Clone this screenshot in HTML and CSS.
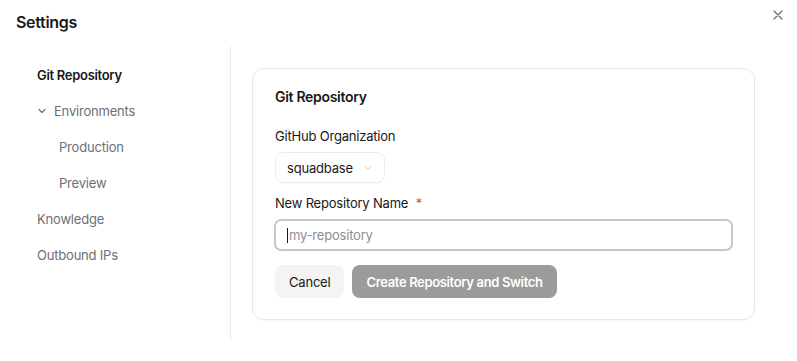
FILE: index.html
```html
<!DOCTYPE html>
<html lang="en">
<head>
    <meta charset="UTF-8">
    <meta name="viewport" content="width=device-width, initial-scale=1.0">
    <title>Settings</title>
    <link rel="stylesheet" href="styles.css">
</head>
<body>

    <div class="dialog">
        <!-- Dialog header -->
        <div class="dialog-header">
            <h1 class="dialog-title">Settings</h1>
            <button class="close-button" aria-label="Close">
                <svg width="10" height="10" viewBox="0 0 10 10">
                    <path d="M1 1L9 9M9 1L1 9" stroke="#6e6e76" stroke-width="1.3" stroke-linecap="round"/>
                </svg>
            </button>
        </div>

        <div class="dialog-body">
            <!-- Side navigation -->
            <nav class="side-nav">
                <a class="nav-item active">Git Repository</a>
                <a class="nav-item">
                    <svg class="nav-chevron" width="10" height="10" viewBox="0 0 10 10">
                        <path d="M2 3.5L5 6.5L8 3.5" fill="none" stroke="#6e6e76" stroke-width="1.2" stroke-linecap="round" stroke-linejoin="round"/>
                    </svg>
                    Environments
                </a>
                <a class="nav-item sub">Production</a>
                <a class="nav-item sub">Preview</a>
                <a class="nav-item">Knowledge</a>
                <a class="nav-item">Outbound IPs</a>
            </nav>

            <!-- Main content -->
            <main class="content">
                <div class="card">
                    <h2 class="card-title">Git Repository</h2>

                    <label class="field-label">GitHub Organization</label>
                    <div class="select">
                        <span>squadbase</span>
                        <svg width="10" height="10" viewBox="0 0 10 10">
                            <path d="M2 3.5L5 6.5L8 3.5" fill="none" stroke="#c4c4c8" stroke-width="1" stroke-linecap="round" stroke-linejoin="round"/>
                        </svg>
                    </div>

                    <label class="field-label">New Repository Name <span class="required">*</span></label>
                    <div class="text-input">
                        <span class="caret"></span><span class="placeholder">my-repository</span>
                    </div>

                    <div class="actions">
                        <button class="btn btn-cancel">Cancel</button>
                        <button class="btn btn-primary" disabled>Create Repository and Switch</button>
                    </div>
                </div>
            </main>
        </div>
    </div>

</body>
</html>
```

FILE: styles.css
```css
/* General Styles */
body {
    font-family: Inter, "Noto Sans", sans-serif;
    margin: 0;
    padding: 0;
    background-color: #ffffff;
    color: #18181b;
    letter-spacing: -0.2px;
}

.dialog {
    display: flex;
    flex-direction: column;
    height: 100vh;
}

/* Header */
.dialog-header {
    display: flex;
    justify-content: space-between;
    align-items: flex-start;
    height: 46px;
    padding: 0 14px 0 16px;
}

.dialog-title {
    margin: 12px 0 0;
    font-size: 16px;
    font-weight: 600;
    line-height: 20px;
    letter-spacing: -0.3px;
}

.close-button {
    margin-top: 10px;
    padding: 0;
    width: 10px;
    height: 10px;
    border: none;
    background: transparent;
    cursor: pointer;
    display: flex;
}

.dialog-body {
    display: flex;
    flex: 1;
    padding-bottom: 20px;
}

/* Side navigation */
.side-nav {
    width: 231px;
    box-sizing: border-box;
    border-right: 1px solid #ececee;
    padding: 11px 0 0 37px;
    display: flex;
    flex-direction: column;
}

.nav-item {
    display: flex;
    align-items: center;
    height: 36px;
    font-size: 13px;
    color: #6e6e76;
    cursor: pointer;
}

.nav-item.active {
    color: #18181b;
    font-weight: 600;
    letter-spacing: -0.3px;
}

.nav-item.sub {
    padding-left: 22px;
}

.nav-chevron {
    margin: 0 7px 0 0;
}

/* Main content */
.content {
    flex: 1;
    padding: 22px 42px 0 21px;
}

.card {
    border: 1px solid #e6e6e8;
    border-radius: 12px;
    box-shadow: 0 1px 2px rgba(0, 0, 0, 0.04);
    padding: 18px 22px 21px;
    display: flex;
    flex-direction: column;
    align-items: flex-start;
}

.card-title {
    margin: 0 0 19px;
    font-size: 14px;
    font-weight: 600;
    line-height: 20px;
    letter-spacing: -0.3px;
}

.field-label {
    font-size: 13px;
    line-height: 20px;
    margin-bottom: 6px;
}

.required {
    color: #e5484d;
    margin-left: 4px;
}

.select {
    display: flex;
    align-items: center;
    gap: 10px;
    height: 31px;
    box-sizing: border-box;
    padding: 0 11px;
    border: 1px solid #ececee;
    border-radius: 8px;
    font-size: 13px;
    margin-bottom: 10px;
}

.text-input {
    display: flex;
    align-items: center;
    align-self: stretch;
    height: 32px;
    box-sizing: border-box;
    padding: 0 11px;
    border: 2px solid #c8c8cc;
    border-radius: 7px;
    font-size: 13px;
    margin-left: -1px;
    margin-right: -1px;
}

.caret {
    width: 1px;
    height: 15px;
    background-color: #18181b;
    margin-right: 1px;
}

.placeholder {
    color: #8e8e94;
}

.actions {
    display: flex;
    gap: 8px;
    margin-top: 14px;
}

.btn {
    height: 33px;
    padding: 0 14px;
    border: none;
    border-radius: 8px;
    font-family: inherit;
    font-size: 13px;
    letter-spacing: -0.2px;
}

.btn-cancel {
    background-color: #f4f4f5;
    color: #18181b;
    cursor: pointer;
}

.btn-primary {
    background-color: #9b9b9b;
    color: #ffffff;
    font-weight: 600;
    letter-spacing: -0.35px;
}
```
